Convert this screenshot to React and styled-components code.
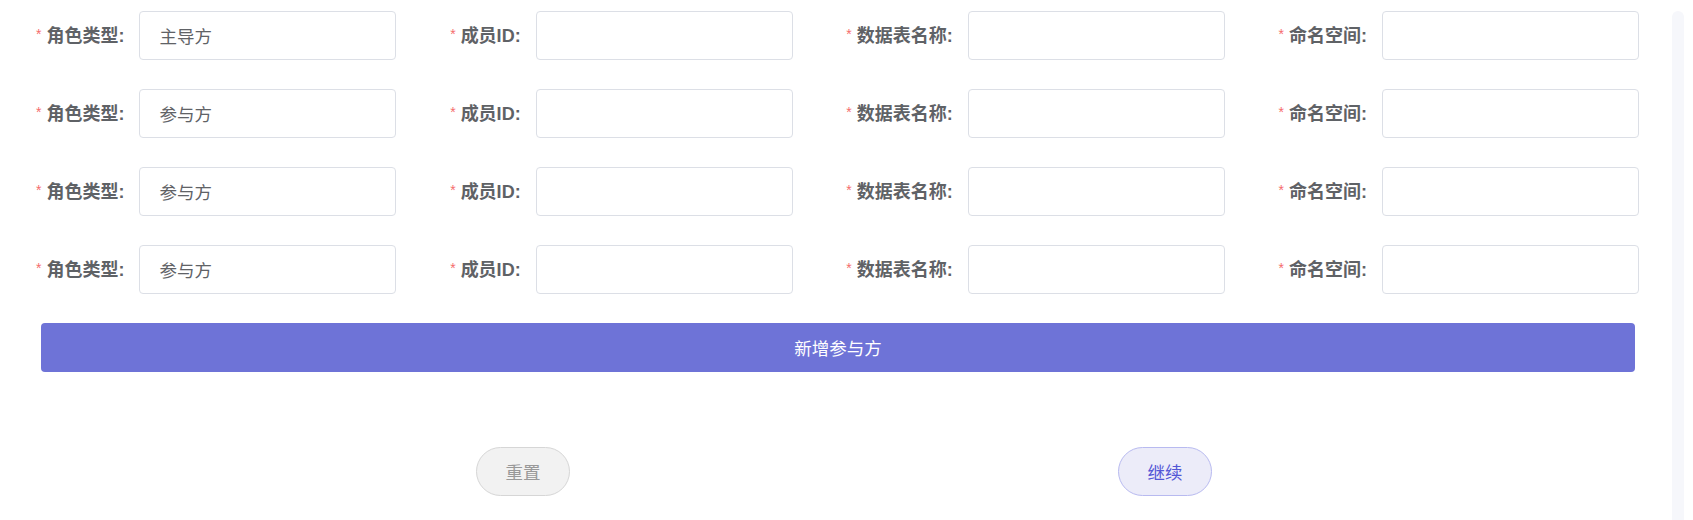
import React from "react";
import styled, { createGlobalStyle } from "styled-components";

const GlobalStyle = createGlobalStyle`
	html, body {
		margin: 0;
		padding: 0;
		background: #ffffff;
	}
	body {
		font-family: "Liberation Sans", "Noto Sans CJK SC", sans-serif;
	}
`;

const Page = styled.div`
	display: flex;
	min-height: 520px;
	width: 1693px;
`;

const Main = styled.div`
	flex: 1;
	display: flex;
	flex-direction: column;
	gap: 29px;
	padding: 11px 33px 0 36px;
`;

const ScrollRail = styled.div`
	width: 12px;
	margin: 11px 9px 0 0;
	border-radius: 6px 6px 0 0;
	background: #f6f7fb;
`;

const Row = styled.div`
	display: flex;
	justify-content: space-between;
	align-items: center;
	height: 49px;
`;

const Item = styled.div`
	display: flex;
	align-items: center;
	gap: 15px;
`;

const Label = styled.label`
	display: flex;
	align-items: center;
	font-size: 18px;
	font-weight: 700;
	color: #5f6266;
	line-height: 24px;
	white-space: nowrap;
`;

const Star = styled.span`
	color: #f56c6c;
	font-size: 14px;
	font-weight: 400;
	margin-right: 5px;
	margin-top: -4px;
`;

const Input = styled.input`
	box-sizing: border-box;
	width: 257px;
	height: 49px;
	padding: 0 19px;
	border: 1px solid #dcdfe6;
	border-radius: 4px;
	background: #fff;
	color: #606266;
	font-family: "Liberation Sans", "Noto Sans CJK SC", sans-serif;
	font-size: 17.5px;
	outline: none;
`;

const AddButton = styled.button`
	height: 49px;
	margin: 0 4px 0 5px;
	border: none;
	border-radius: 4px;
	background: #6e73d7;
	color: #ffffff;
	font-family: "Liberation Sans", "Noto Sans CJK SC", sans-serif;
	font-size: 17.5px;
	cursor: pointer;
`;

const Footer = styled.div`
	display: flex;
	justify-content: center;
	gap: 548px;
	padding-left: 13px;
	margin-top: 46px;
`;

const PillButton = styled.button`
	box-sizing: border-box;
	width: 94px;
	height: 49px;
	border-radius: 25px;
	border: 1px solid ${(p) => (p.primary ? "#b8baf0" : "#d6d6d6")};
	background: ${(p) => (p.primary ? "#ececf9" : "#f2f2f2")};
	color: ${(p) => (p.primary ? "#5357d6" : "#999999")};
	font-family: "Liberation Sans", "Noto Sans CJK SC", sans-serif;
	font-size: 17.5px;
	cursor: pointer;
`;

const rows = [
	{ role: "主导方" },
	{ role: "参与方" },
	{ role: "参与方" },
	{ role: "参与方" },
];

const Field = ({ label, value }) => (
	<Item>
		<Label>
			<Star>*</Star>
			{label}:
		</Label>
		<Input defaultValue={value} />
	</Item>
);

const App = () => {
	return (
		<>
			<GlobalStyle />
			<Page>
				<Main>
					{rows.map((r, i) => (
						<Row key={i}>
							<Field label="角色类型" value={r.role} />
							<Field label="成员ID" value="" />
							<Field label="数据表名称" value="" />
							<Field label="命名空间" value="" />
						</Row>
					))}
					<AddButton type="button">新增参与方</AddButton>
					<Footer>
						<PillButton type="button">重置</PillButton>
						<PillButton type="button" primary>
							继续
						</PillButton>
					</Footer>
				</Main>
				<ScrollRail />
			</Page>
		</>
	);
};

export default App;
